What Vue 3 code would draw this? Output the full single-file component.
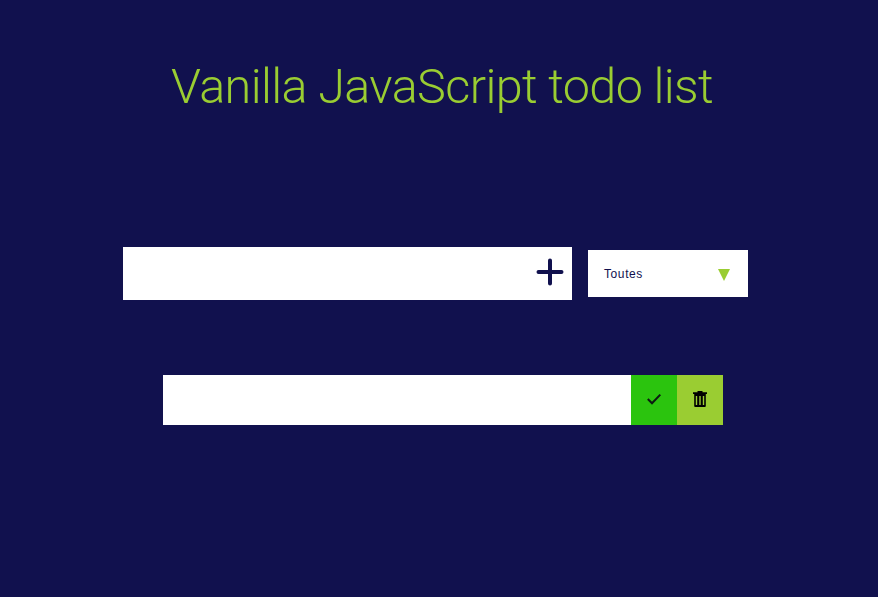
<script setup>
import { ref } from 'vue';

const todos = ref([{ id: 1, text: '' }]);
</script>

<template>
    <div class="page">
        <header class="header">
            <h1>Vanilla JavaScript todo list</h1>
        </header>

        <form class="todo-form" @submit.prevent>
            <div class="input-wrap">
                <input type="text" class="todo-input" />
                <button class="add-btn" type="submit" aria-label="Ajouter">
                    <svg width="28" height="28" viewBox="0 0 28 28">
                        <path d="M14 2.5v23M2.5 14h23" stroke="#11114e" stroke-width="4" stroke-linecap="round" fill="none" />
                    </svg>
                </button>
            </div>
            <div class="select">
                <span>Toutes</span>
                <i class="arrow"></i>
            </div>
        </form>

        <ul class="todo-list">
            <li v-for="todo in todos" :key="todo.id" class="todo-item">
                <span class="todo-text">{{ todo.text }}</span>
                <button class="check-btn" aria-label="Terminer">
                    <svg width="16" height="12" viewBox="0 0 16 12">
                        <path d="M1.8 6l4.2 4.2L14.3 1.6" stroke="#0c1a12" stroke-width="2" fill="none" />
                    </svg>
                </button>
                <button class="trash-btn" aria-label="Supprimer">
                    <svg width="14" height="16" viewBox="0 0 14 16">
                        <path d="M0 1.2h4.5V0h5v1.2H14V3H0z" fill="#000" />
                        <path d="M1.2 3h11.6v12a1 1 0 0 1-1 1H2.2a1 1 0 0 1-1-1z" fill="#000" />
                        <path d="M2.8 5h1.4v9H2.8zM6.3 5h1.4v9H6.3zM9.8 5h1.4v9H9.8z" fill="#9acd32" />
                    </svg>
                </button>
            </li>
        </ul>
    </div>
</template>

<style>
body {
    background: #11114e;
}
</style>

<style scoped>
.page {
    height: 597px;
    font-family: Roboto, "Liberation Sans", sans-serif;
    overflow: hidden;
}
.header {
    padding-top: 59px;
    padding-left: 6px;
    text-align: center;
}
h1 {
    margin: 0;
    font-size: 48.5px;
    line-height: 56px;
    font-weight: 300;
    letter-spacing: -0.6px;
    color: #9acd32;
}
.todo-form {
    display: flex;
    align-items: center;
    gap: 16px;
    margin-top: 132px;
    padding-left: 123px;
}
.input-wrap {
    display: flex;
    width: 449px;
    height: 53px;
    background: #fff;
}
.todo-input {
    flex: 1;
    min-width: 0;
    border: 0;
    outline: 0;
    background: none;
}
.add-btn {
    width: 46px;
    padding: 0 0 4px 1px;
    border: 0;
    background: none;
    display: flex;
    align-items: center;
    justify-content: center;
}
.select {
    width: 160px;
    height: 47px;
    box-sizing: border-box;
    padding: 0 18px 0 16px;
    background: #fff;
    color: #11114e;
    font-family: "Liberation Sans", sans-serif;
    font-size: 12px;
    letter-spacing: 0.6px;
    display: flex;
    align-items: center;
    justify-content: space-between;
}
.arrow {
    width: 0;
    height: 0;
    margin-top: 3px;
    border-left: 6px solid transparent;
    border-right: 6px solid transparent;
    border-top: 12px solid #9acd32;
}
.todo-list {
    list-style: none;
    margin: 75px 0 0 163px;
    padding: 0;
    width: 560px;
}
.todo-item {
    display: flex;
    height: 50px;
    background: #fff;
}
.todo-text {
    flex: 1;
}
.check-btn,
.trash-btn {
    width: 46px;
    padding: 0 0 2px;
    border: 0;
    display: flex;
    align-items: center;
    justify-content: center;
}
.check-btn {
    background: #2bc40e;
}
.trash-btn {
    background: #9acd32;
}
</style>
